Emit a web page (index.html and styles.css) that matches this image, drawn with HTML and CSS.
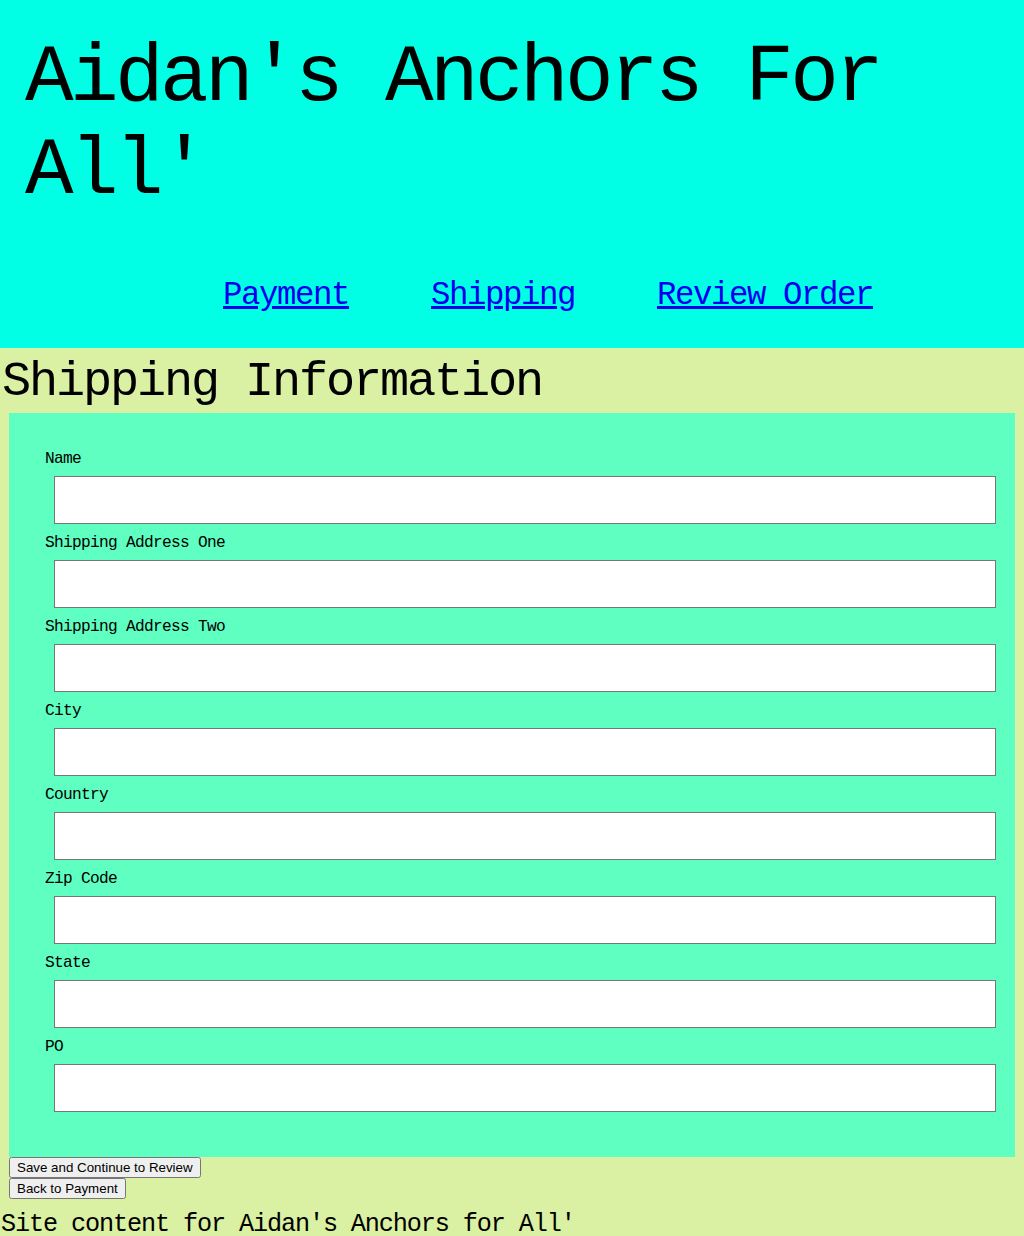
FILE: index.html
```html
<!DOCTYPE html>
<html lang="en">
<head>
<meta charset="utf-8">
<title>Shipping - Aidan's Anchors For All'</title>
<link rel="stylesheet" href="styles.css">
</head>
<body>
<header class="site-header">
  <h1 class="site-title">Aidan's Anchors For All'</h1>
  <nav class="site-nav">
    <a href="#">Payment</a>
    <a href="#">Shipping</a>
    <a href="#">Review Order</a>
  </nav>
</header>
<main class="page">
  <h2 class="page-title">Shipping Information</h2>
  <form class="ship-form">
    <div class="field"><label class="field-label" for="f1">Name</label><input class="field-input" id="f1" type="text"></div>
    <div class="field"><label class="field-label" for="f2">Shipping Address One</label><input class="field-input" id="f2" type="text"></div>
    <div class="field"><label class="field-label" for="f3">Shipping Address Two</label><input class="field-input" id="f3" type="text"></div>
    <div class="field"><label class="field-label" for="f4">City</label><input class="field-input" id="f4" type="text"></div>
    <div class="field"><label class="field-label" for="f5">Country</label><input class="field-input" id="f5" type="text"></div>
    <div class="field"><label class="field-label" for="f6">Zip Code</label><input class="field-input" id="f6" type="text"></div>
    <div class="field"><label class="field-label" for="f7">State</label><input class="field-input" id="f7" type="text"></div>
    <div class="field"><label class="field-label" for="f8">PO</label><input class="field-input" id="f8" type="text"></div>
  </form>
  <div class="actions">
    <button class="btn" type="button">Save and Continue to Review</button>
    <button class="btn" type="button">Back to Payment</button>
  </div>
  <footer class="site-footer">Site content for Aidan's Anchors for All'</footer>
</main>
</body>
</html>
```
FILE: styles.css
```css
html, body {
  margin: 0;
  padding: 0;
}
body {
  background: #daf0a2;
  font-family: "Liberation Mono", "DejaVu Sans Mono", monospace;
  color: #000;
}
.site-header {
  background: #00ffe5;
  padding: 32px 0 26px 25px;
}
.site-title {
  margin: 0;
  font-size: 81px;
  letter-spacing: -3.6px;
  font-weight: normal;
  line-height: 93px;
}
.site-nav {
  display: flex;
  justify-content: center;
  gap: 82px;
  padding-left: 47px;
  margin-top: 52px;
  font-size: 32.4px;
  letter-spacing: -1.44px;
  line-height: 52px;
}
.site-nav a {
  color: #0000ee;
}
.page-title {
  margin: 0;
  padding: 5px 0 0 2px;
  font-size: 48.6px;
  letter-spacing: -2.16px;
  font-weight: normal;
  line-height: 60px;
}
.ship-form {
  margin: 0 9px;
  background: #5effc1;
  padding: 27px 19px 45px 36px;
}
.field-label {
  display: block;
  padding-top: 2px;
  font-size: 16.2px;
  letter-spacing: -0.72px;
  line-height: 34px;
}
.field-input {
  display: block;
  box-sizing: border-box;
  margin-left: 9px;
  width: calc(100% - 9px);
  height: 48px;
  border: 1px solid #767676;
  border-radius: 0;
  background: #fff;
  padding: 0 4px;
}
.actions {
  display: flex;
  flex-direction: column;
  align-items: flex-start;
  padding-left: 9px;
}
.btn {
  margin: 0;
}
.site-footer {
  padding-left: 1px;
  font-size: 25.2px;
  letter-spacing: -1.12px;
  line-height: 52px;
}
```
